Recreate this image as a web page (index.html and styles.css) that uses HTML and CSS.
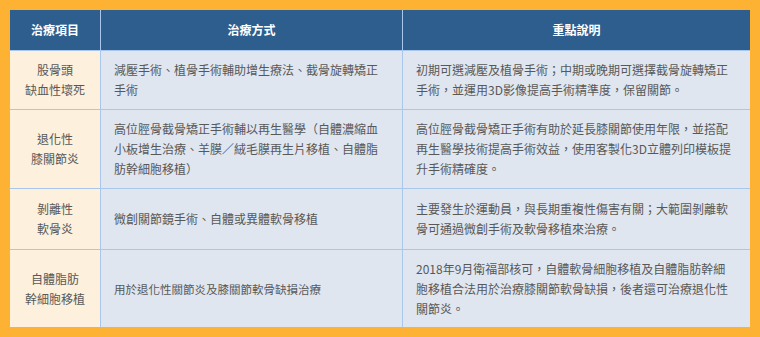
FILE: index.html
```html
<!DOCTYPE html>
<html lang="zh-Hant">
<head>
<meta charset="utf-8">
<link rel="stylesheet" href="styles.css">
</head>
<body>
<div class="table">
  <div class="cell head">治療項目</div>
  <div class="cell head">治療方式</div>
  <div class="cell head">重點說明</div>

  <div class="cell item">股骨頭<br>缺血性壞死</div>
  <div class="cell body">減壓手術、植骨手術輔助增生療法、截骨旋轉矯正手術</div>
  <div class="cell body">初期可選減壓及植骨手術；中期或晚期可選擇截骨旋轉矯正手術，並運用3D影像提高手術精準度，保留關節。</div>

  <div class="cell item">退化性<br>膝關節炎</div>
  <div class="cell body">高位脛骨截骨矯正手術輔以再生醫學（自體濃縮血小板增生治療、羊膜／絨毛膜再生片移植、自體脂肪幹細胞移植）</div>
  <div class="cell body">高位脛骨截骨矯正手術有助於延長膝關節使用年限，並搭配再生醫學技術提高手術效益，使用客製化3D立體列印模板提升手術精確度。</div>

  <div class="cell item">剝離性<br>軟骨炎</div>
  <div class="cell body">微創關節鏡手術、自體或異體軟骨移植</div>
  <div class="cell body">主要發生於運動員，與長期重複性傷害有關；大範圍剝離軟骨可通過微創手術及軟骨移植來治療。</div>

  <div class="cell item">自體脂肪<br>幹細胞移植</div>
  <div class="cell body small">用於退化性關節炎及膝關節軟骨缺損治療</div>
  <div class="cell body">2018年9月衛福部核可，自體軟骨細胞移植及自體脂肪幹細胞移植合法用於治療膝關節軟骨缺損，後者還可治療退化性關節炎。</div>
</div>
</body>
</html>
```

FILE: styles.css
```css
html, body {
  margin: 0;
  background: #fdb234;
}
body {
  padding: 10px;
  font-family: "Noto Sans CJK TC", "Noto Sans", sans-serif;
}
.table {
  display: grid;
  grid-template-columns: 90px 301px 347px;
  grid-template-rows: 40px 58px 78px 60px 77px;
  gap: 1px;
  width: 740px;
  background: #a9c7ec;
}
.cell {
  display: flex;
  align-items: center;
  font-size: 12px;
  line-height: 20px;
  color: #585858;
}
.head {
  background: #2d5e8e;
  color: #ffffff;
  font-weight: bold;
  justify-content: center;
}
.item {
  background: #fdf0dc;
  justify-content: center;
  text-align: center;
}
.body {
  background: #dfe6f0;
  padding: 0 13px;
}
.small {
  font-size: 11.5px;
}
```
